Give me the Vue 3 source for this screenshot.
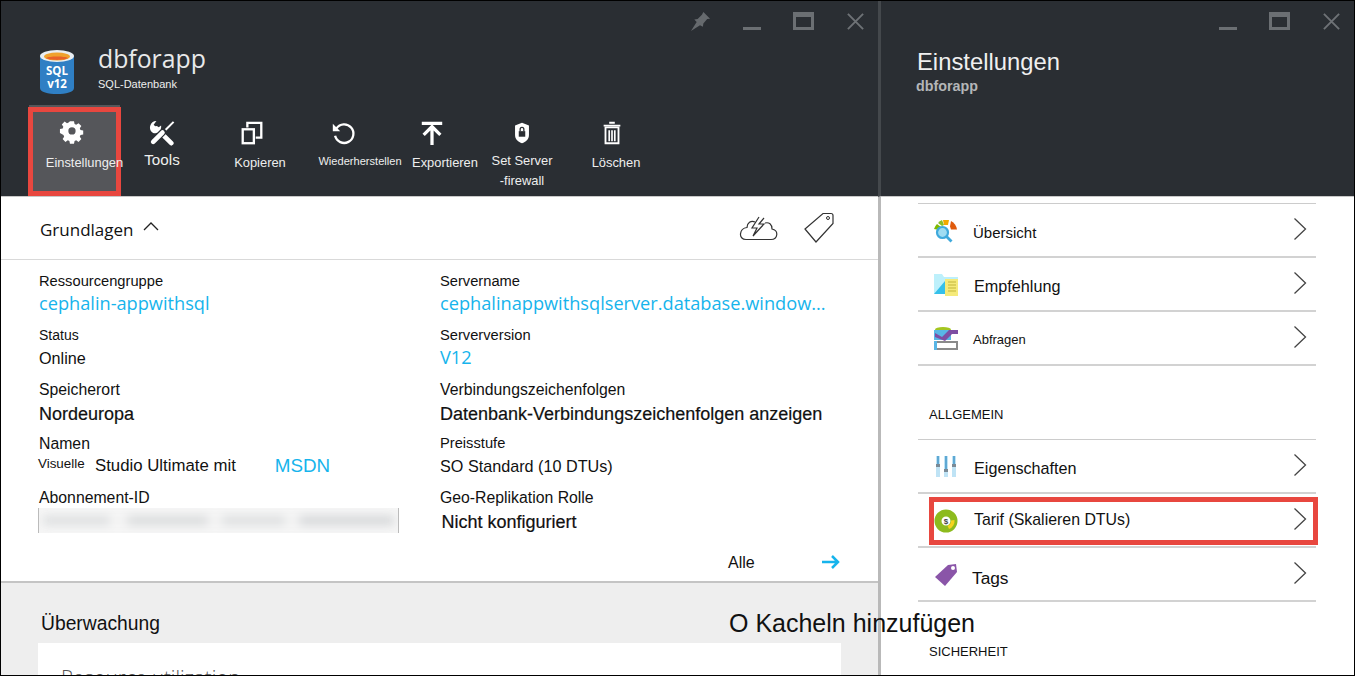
<template>
  <div class="frame">
    <section class="blade blade_main">
      <header class="head">
        <div class="win_btns">
          <svg class="win_ic pin" viewBox="0 0 22 22"><path d="M14 1l7 7-3 .5-4 4.500-.5 3.500-3-1.500L1 21l6-9.500L4.500 9 8 8.500l4.500-4.500z" fill="#666a6e" /></svg>
          <span class="win_min" />
          <span class="win_max" />
          <svg class="win_ic" viewBox="0 0 20 20"><path d="M2 2l16 16M18 2L2 18" stroke="#6e7276" stroke-width="2" fill="none" /></svg>
        </div>
        <div class="title_row">
          <svg class="db_ic" viewBox="0 0 36 46">
            <path d="M1 7v32c0 4 8 6 17 6s17-2 17-6V7z" fill="#2f7fc4" />
            <ellipse cx="18" cy="7" rx="17" ry="6" fill="#e9eef2" />
            <ellipse cx="18" cy="7.500" rx="13" ry="4" fill="#f0a22e" />
            <path d="M7 9c3-2 19-2 22 0-3 2.500-19 2.500-22 0z" fill="#e8622a" />
            <text x="18" y="26" class="db_txt">SQL</text>
            <text x="18" y="39" class="db_txt">v12</text>
          </svg>
          <div>
            <h1 class="res_name">dbforapp</h1>
            <p class="res_type">SQL-Datenbank</p>
          </div>
        </div>
        <nav class="toolbar">
          <button v-for="t in tools" :key="t.label" class="tool" :class="t.cls" :style="{ width: t.w + 'px' }">
            <svg class="tool_ic" viewBox="0 0 28 28" v-html="t.svg" />
            <span class="tool_label" :style="{ marginLeft: t.shift * 2 + 'px' }">{{ t.label }}<template v-if="t.line2"><br />{{ t.line2 }}</template></span>
          </button>
        </nav>
      </header>

      <div class="essentials">
        <div class="ess_head">
          <span class="ess_title">Grundlagen</span>
          <svg class="caret" viewBox="0 0 16 10"><path d="M1 9l7-7 7 7" fill="none" stroke="#222" stroke-width="1.300" /></svg>
          <svg class="cloud" viewBox="0 0 40 28">
            <path d="M8 25.500h25c7 0 8-9 1-10.500 0-5-3-7-7-6M17 8c-4-2-8 1-8 5.500-8 1-9 12-1 12" fill="none" stroke="#333" stroke-width="1.200" />
            <path d="M21 3l-7 11h5l-4 8 11-12h-5l5-6" fill="#fff" stroke="#333" stroke-width="1.200" />
          </svg>
          <svg class="tag" viewBox="0 0 32 32"><path d="M1 17L19 1.500h8q2 0 2 2v8L12 30z" fill="none" stroke="#333" stroke-width="1.200" /><circle cx="24" cy="6" r="1.500" fill="none" stroke="#333" /></svg>
        </div>
        <div class="ess_grid">
          <div class="field"><span class="lbl">Ressourcengruppe</span><a class="val link">cephalin-appwithsql</a></div>
          <div class="field"><span class="lbl">Servername</span><a class="val link">cephalinappwithsqlserver.database.window...</a></div>
          <div class="field"><span class="lbl lbl_sm">Status</span><span class="val plain">Online</span></div>
          <div class="field"><span class="lbl">Serverversion</span><a class="val link">V12</a></div>
          <div class="field"><span class="lbl lbl_lg">Speicherort</span><span class="val strong">Nordeuropa</span></div>
          <div class="field"><span class="lbl lbl_lg">Verbindungszeichenfolgen</span><span class="val strong">Datenbank-Verbindungszeichenfolgen anzeigen</span></div>
          <div class="field">
            <span class="lbl lbl_lg">Namen</span>
            <span class="val sub_row"><small>Visuelle</small><span>Studio Ultimate mit</span><a class="link msdn">MSDN</a></span>
          </div>
          <div class="field"><span class="lbl">Preisstufe</span><span class="val plain">SO Standard (10 DTUs)</span></div>
          <div class="field"><span class="lbl lbl_lg">Abonnement-ID</span><span class="blur_box"><i /></span></div>
          <div class="field"><span class="lbl lbl_lg">Geo-Replikation Rolle</span><span class="val strong nudge">Nicht konfiguriert</span></div>
        </div>
        <div class="all_row">
          <span>Alle</span>
          <svg class="arrow" viewBox="0 0 20 16"><path d="M1 8h16M11 2l6 6-6 6" fill="none" stroke="#16b4ec" stroke-width="2.500" /></svg>
        </div>
      </div>

      <div class="monitor">
        <h2 class="mon_title">Überwachung</h2>
        <div class="mon_card">Resource utilization</div>
      </div>
    </section>

    <section class="blade blade_settings">
      <header class="head head_settings">
        <div class="win_btns">
          <span class="win_min" />
          <span class="win_max" />
          <svg class="win_ic" viewBox="0 0 20 20"><path d="M2 2l16 16M18 2L2 18" stroke="#6e7276" stroke-width="2" fill="none" /></svg>
        </div>
        <h2 class="set_title">Einstellungen</h2>
        <p class="set_sub">dbforapp</p>
      </header>
      <div class="set_body">
        <ul class="set_list">
          <li v-for="r in group1" :key="r.label" class="set_row">
            <svg class="row_ic" viewBox="0 0 24 24" v-html="r.svg" />
            <span :class="r.cls">{{ r.label }}</span>
            <svg class="chev" viewBox="0 0 14 24"><path d="M1.500 1.500l11 10.500-11 10.500" fill="none" stroke="#444" stroke-width="1.300" /></svg>
          </li>
        </ul>
        <h3 class="set_group">ALLGEMEIN</h3>
        <ul class="set_list">
          <li v-for="r in group2" :key="r.label" class="set_row">
            <svg class="row_ic" viewBox="0 0 24 24" v-html="r.svg" />
            <span :class="r.cls">{{ r.label }}</span>
            <svg class="chev" viewBox="0 0 14 24"><path d="M1.500 1.500l11 10.500-11 10.500" fill="none" stroke="#444" stroke-width="1.300" /></svg>
          </li>
        </ul>
        <h3 class="set_group group_sec">SICHERHEIT</h3>
      </div>
    </section>

    <div class="hilite hl_tool" />
    <div class="hilite hl_row" />
    <div class="add_tiles">O Kacheln hinzufügen</div>
  </div>
</template>

<script setup>
const tools = [
  {
    label: "Einstellungen", w: 91, shift: 10, cls: "active",
    svg: '<path fill="#fff" fill-rule="evenodd" d="M11.500 2h5l.7 3.400 2 .8 2.900-1.900 3.500 3.500-1.900 2.900.8 2 3.400.7v5l-3.400.7-.8 2 1.900 2.900-3.500 3.500-2.900-1.900-2 .8-.7 3.400h-5l-.7-3.400-2-.8-2.900 1.900-3.500-3.500 1.900-2.900-.8-2L-.900 16.500v-5l3.400-.7.8-2-1.900-2.900 3.500-3.500 2.900 1.900 2-.8zM14 9.500a4.500 4.500 0 100 9 4.500 4.500 0 000-9z" transform="translate(1.800 1.800) scale(.87)"/>',
  },
  {
    label: "Tools", w: 84, shift: 0, cls: "big",
    svg: '<path d="M8 1L5 5l4 4 4-3a7 7 0 01-8.500 8A7 7 0 018 1z" fill="#fff"/><path d="M8 9l16 16" stroke="#fff" stroke-width="5" stroke-linecap="round"/><path d="M27 1.500L14 14.500" stroke="#2a2e33" stroke-width="4.500"/><path d="M26.500 2L15 13.500" stroke="#fff" stroke-width="2.200"/><path d="M15 13l-11 11" stroke="#2a2e33" stroke-width="7.500" stroke-linecap="round"/><path d="M14.500 13.500l-10 10" stroke="#fff" stroke-width="5" stroke-linecap="round"/>',
  },
  {
    label: "Kopieren", w: 96, shift: 8, cls: "",
    svg: '<path d="M9 8V3h15v16h-6" fill="none" stroke="#fff" stroke-width="2.500"/><rect x="4" y="10" width="12" height="15" fill="none" stroke="#fff" stroke-width="2.500"/>',
  },
  {
    label: "Wiederherstellen", w: 86, shift: 17, cls: "tiny",
    svg: '<path d="M7 9a10 10 0 11-1.500 8" fill="none" stroke="#fff" stroke-width="2.500"/><path d="M3 4v8h8z" fill="#fff"/>',
  },
  {
    label: "Exportieren", w: 92, shift: 13, cls: "",
    svg: '<path d="M3 3.500h22M14 27V9M5 16l9-9 9 9" fill="none" stroke="#fff" stroke-width="3.500"/>',
  },
  {
    label: "Set Server", line2: "-firewall", w: 88, shift: 0, cls: "two",
    svg: '<path d="M14 3l7.500 3v10c0 5-3.500 8-7.500 9-4-1-7.500-4-7.500-9V6z" fill="#fff"/><rect x="10.500" y="12" width="7" height="6" fill="#2a2e33"/><path d="M12 12V10a2 2 0 014 0v2" fill="none" stroke="#2a2e33" stroke-width="1.400"/>',
  },
  {
    label: "Löschen", w: 92, shift: 4, cls: "",
    svg: '<path d="M5 6h18M11 3h6" stroke="#fff" stroke-width="2" fill="none"/><path d="M7 8h14v17H7z" fill="none" stroke="#fff" stroke-width="2"/><path d="M11 11v12M14 11v12M17 11v12" stroke="#fff" stroke-width="1.800"/>',
  },
];

const group1 = [
  {
    label: "Übersicht", cls: "t_small",
    svg: '<path d="M0 10a12 12 0 013-5l4 3-2 3z" fill="#7fba00"/><path d="M4 4a12 12 0 014-3l2 5-2 1z" fill="#8cbf26"/><path d="M9 1h6l-1 5h-4z" fill="#f2a900"/><path d="M17 2a12 12 0 016 8.500h-6l-1-3z" fill="#e05a0c"/><circle cx="8.500" cy="13.500" r="5.500" fill="#9fdcf2" stroke="#3fa9dc" stroke-width="2.200"/><path d="M12.500 17.500l5 5" stroke="#3fa9dc" stroke-width="2.800"/>',
  },
  {
    label: "Empfehlung", cls: "t_big",
    svg: '<path d="M0 1h8l2 3h14v7H11v10H0z" fill="#bdf0fb"/><path d="M0 21L11 8v13z" fill="#35c0ea"/><rect x="11" y="6" width="13" height="17" fill="#f5ea7a"/><path d="M14 9h8M14 12h8M14 15h8M14 18h8" stroke="#c2b53a"/>',
  },
  {
    label: "Abfragen", cls: "t_tiny",
    svg: '<ellipse cx="9" cy="2.500" rx="8" ry="2.500" fill="#a4c620"/><path d="M0 3h17v10H0z" fill="#58b6e6"/><path d="M1 6l7 4 7-7h9v4h-6l-7 7-10-4z" fill="#7d4ea3"/><rect x="1" y="15" width="22" height="7" fill="#fff" stroke="#8a8a8a" stroke-width="2"/><path d="M0 14h3v9H0z" fill="#58b6e6"/>',
  },
];

const group2 = [
  {
    label: "Eigenschaften", cls: "t_big",
    svg: '<path d="M2 1h4v21H2zM10 1h4v21h-4zM18 1h4v21h-4z" fill="#bfe3f5"/><path d="M4 1v10M12 1v14M20 1v10" stroke="#5fa8d3" stroke-width="2"/><path d="M2 9h4v3H2zM10 14h4v3h-4zM18 9h4v3h-4z" fill="#7a8a96"/>',
  },
  {
    label: "Tarif (Skalieren DTUs)", cls: "t_mid",
    svg: '<circle cx="12" cy="12" r="8" fill="#fff" stroke="#8dbb1e" stroke-width="7"/><path d="M20.500 11A8.500 8.500 0 0115 20l-1.500-3.300A5 5 0 0017 11.500z" fill="#f7d31e"/><text x="12" y="15" text-anchor="middle" font-size="8" font-weight="700" fill="#444" font-family="Liberation Sans">$</text>',
  },
  {
    label: "Tags", cls: "t_tags",
    svg: '<path d="M1 14L14 2l8-1 1 8-12 14z" fill="#8a55a8"/><circle cx="19" cy="5" r="2" fill="#fff"/>',
  },
];
</script>

<style scoped>
.frame {
  position: relative;
  display: flex;
  box-sizing: border-box;
  width: 1355px;
  height: 676px;
  overflow: hidden;
  background: #fff;
  border: 1px solid #000;
  font-family: "Liberation Sans", Arial, sans-serif;
  color: #111;
}
.blade {
  display: flex;
  flex-direction: column;
  flex-shrink: 0;
  height: 100%;
}
.blade_main {
  width: 877px;
}
.blade_settings {
  flex: 1;
  border-left: 3px solid #b9b9b9;
}
.head {
  position: relative;
  box-sizing: border-box;
  height: 196px;
  flex-shrink: 0;
  background: #2a2e33;
  border-bottom: 1px solid #c8c8c8;
}
.head_settings {
  margin-left: -3px;
  border-left: 3px solid #44484c;
  padding: 46px 0 0 36px;
}
.win_btns {
  position: absolute;
  top: 10px;
  right: 13px;
  display: flex;
  align-items: center;
  gap: 32px;
  height: 20px;
}
.win_ic {
  width: 19px;
  height: 19px;
}
.pin {
  width: 21px;
  height: 21px;
}
.win_min {
  width: 18px;
  height: 3px;
  margin: 15px 0 0;
  background: #6b6f73;
}
.win_max {
  box-sizing: border-box;
  width: 21px;
  height: 18px;
  border: 3px solid #6b6f73;
  border-top-width: 5px;
}
.title_row {
  display: flex;
  gap: 23px;
  padding: 48px 0 0 38px;
}
.db_ic {
  width: 36px;
  height: 46px;
}
.db_txt {
  fill: #fff;
  font: 700 11.500px "Open Sans", sans-serif;
  text-anchor: middle;
}
.res_name {
  margin: -7px 0 0;
  color: #e8e9ea;
  font: 400 24.800px/32px "Open Sans", sans-serif;
}
.res_type {
  margin: 4px 0 0;
  color: #eee;
  font-size: 11px;
  line-height: 13px;
}
.toolbar {
  display: flex;
  margin: 10px 0 0 28px;
}
.tool {
  display: flex;
  flex-direction: column;
  align-items: center;
  box-sizing: border-box;
  height: 90px;
  padding: 15px 0 0;
  background: none;
  border: 0;
  color: #eee;
  font: 12.900px/15px "Liberation Sans", Arial, sans-serif;
  white-space: nowrap;
}
.tool.active {
  background: #55565a;
  padding-top: 13px;
}
.tool.active .tool_ic {
  margin-right: 5px;
}
.tool_ic {
  flex-shrink: 0;
  width: 26px;
  height: 26px;
}
.tool_label {
  position: relative;
  z-index: 1;
  margin-top: 9px;
}
.tool.active .tool_label {
  margin-top: 11px;
}
.tool.big .tool_label {
  margin-top: 6px;
  font-size: 15.200px;
}
.tool.tiny .tool_label {
  margin-top: 8px;
  font-size: 11.100px;
}
.tool.two .tool_label {
  margin-top: 5px;
  line-height: 20px;
}
.essentials {
  box-sizing: border-box;
  height: 386px;
  flex-shrink: 0;
  border-bottom: 2px solid #c4c4c4;
}
.ess_head {
  display: flex;
  align-items: center;
  height: 62px;
  padding: 0 42px 0 39px;
  border-bottom: 1px solid #d9d9d9;
}
.ess_title {
  margin-top: 2px;
  font: 400 17px "Open Sans", sans-serif;
}
.caret {
  width: 16px;
  height: 10px;
  margin: -4px 0 0 9px;
}
.cloud {
  width: 40px;
  height: 28px;
  margin-left: auto;
}
.tag {
  width: 32px;
  height: 32px;
  margin-left: 26px;
}
.ess_grid {
  display: grid;
  grid-template-columns: 401px 1fr;
  grid-auto-rows: 54px;
  padding: 12px 0 0 38px;
}
.field {
  display: flex;
  flex-direction: column;
  min-width: 0;
}
.lbl {
  font-size: 14.700px;
  line-height: 18px;
  white-space: nowrap;
}
.lbl_sm {
  font-size: 14px;
}
.lbl_lg {
  padding-top: 1px;
  font-size: 15.800px;
}
.val {
  margin-top: 4px;
  font-size: 17px;
  line-height: 20px;
  white-space: nowrap;
}
.plain {
  font-size: 16.200px;
}
.link {
  color: #16b4ec;
}
a.val {
  margin-top: 2px;
  font: 400 18.200px/22px "Open Sans", sans-serif;
}
.strong {
  margin-top: 5px;
  font-size: 18px;
  -webkit-text-stroke: 0.2px #111;
}
.nudge {
  margin-left: 1.500px;
}
.sub_row {
  display: flex;
  align-items: flex-start;
  margin: 3px 0 0 -1px;
  font-size: 16.800px;
}
.sub_row small {
  width: 57px;
  font-size: 13.400px;
  line-height: 16px;
}
.msdn {
  margin-left: 39px;
  font-size: 18.800px;
}
.blur_box {
  display: block;
  box-sizing: border-box;
  width: 361px;
  height: 25px;
  margin: 1px 0 0 -1px;
  overflow: hidden;
  background: #f6f6f6;
  border-left: 1px solid #bbb;
  border-right: 1px solid #bbb;
}
.blur_box i {
  display: block;
  height: 9px;
  margin: 8px 4px;
  background: linear-gradient(90deg, #dcdedf 0 18%, #f4f4f4 20% 23%, #d8dadb 25% 46%, #f4f4f4 48% 50%, #dcdedf 52% 68%, #f4f4f4 70% 72%, #d4d6d8 74% 100%);
  filter: blur(5px);
}
.all_row {
  display: flex;
  align-items: center;
  gap: 66px;
  padding: 12px 0 0 727px;
  font-size: 16px;
}
.arrow {
  width: 20px;
  height: 16px;
  margin-top: -2px;
}
.monitor {
  flex: 1;
  min-height: 0;
  overflow: hidden;
  padding: 29px 37px 0;
  background: #eee;
}
.mon_title {
  margin: 0 0 0 3px;
  font: 400 19.300px/24px "Liberation Sans", sans-serif;
}
.mon_card {
  height: 60px;
  margin-top: 7px;
  padding: 22px 23px;
  background: #fff;
  color: #555;
  font: 300 20.400px/24px "Open Sans", sans-serif;
}
.set_title {
  margin: 0;
  color: #f0f0f0;
  font: 400 23.800px/30px "Liberation Sans", sans-serif;
}
.set_sub {
  margin: 1px 0 0 -1px;
  color: #b4b6b8;
  font-size: 14.300px;
  font-weight: 700;
}
.set_body {
  padding: 6px 38px 0 37px;
}
.set_list {
  margin: 0;
  padding: 0;
  list-style: none;
  border-top: 1px solid #ccc;
}
.set_row {
  display: flex;
  align-items: center;
  box-sizing: border-box;
  height: 54px;
  padding: 0 9px 0 16px;
  border-bottom: 2px solid #d2d2d2;
  white-space: nowrap;
}
.row_ic {
  flex-shrink: 0;
  width: 24px;
  height: 24px;
  margin-top: 2px;
  margin-right: 15px;
}
.chev {
  width: 14px;
  height: 24px;
  margin-left: auto;
  margin-top: -2px;
}
.t_small {
  margin-top: 4px;
  font-size: 15px;
}
.t_tiny {
  margin-top: 2px;
  font-size: 13px;
}
.t_big {
  margin: 5px 0 0 1px;
  font-size: 16.200px;
}
.t_mid {
  margin-left: 1px;
  font-size: 15.900px;
}
.t_tags {
  margin: 8px 0 0 -1px;
  font-size: 17.300px;
}
.set_group {
  margin: 42px 0 17px 11px;
  font-size: 13px;
  font-weight: 400;
  line-height: 14px;
}
.group_sec {
  margin-top: 43px;
}
.hilite {
  position: absolute;
  box-sizing: border-box;
  border: 5px solid #e8473f;
}
.hl_tool {
  top: 106px;
  left: 27px;
  width: 93px;
  height: 89px;
}
.hl_row {
  top: 496px;
  left: 928px;
  width: 389px;
  height: 48px;
}
.add_tiles {
  position: absolute;
  top: 607px;
  left: 728px;
  font: 400 25px/30px "Liberation Sans", sans-serif;
  white-space: nowrap;
}
</style>
